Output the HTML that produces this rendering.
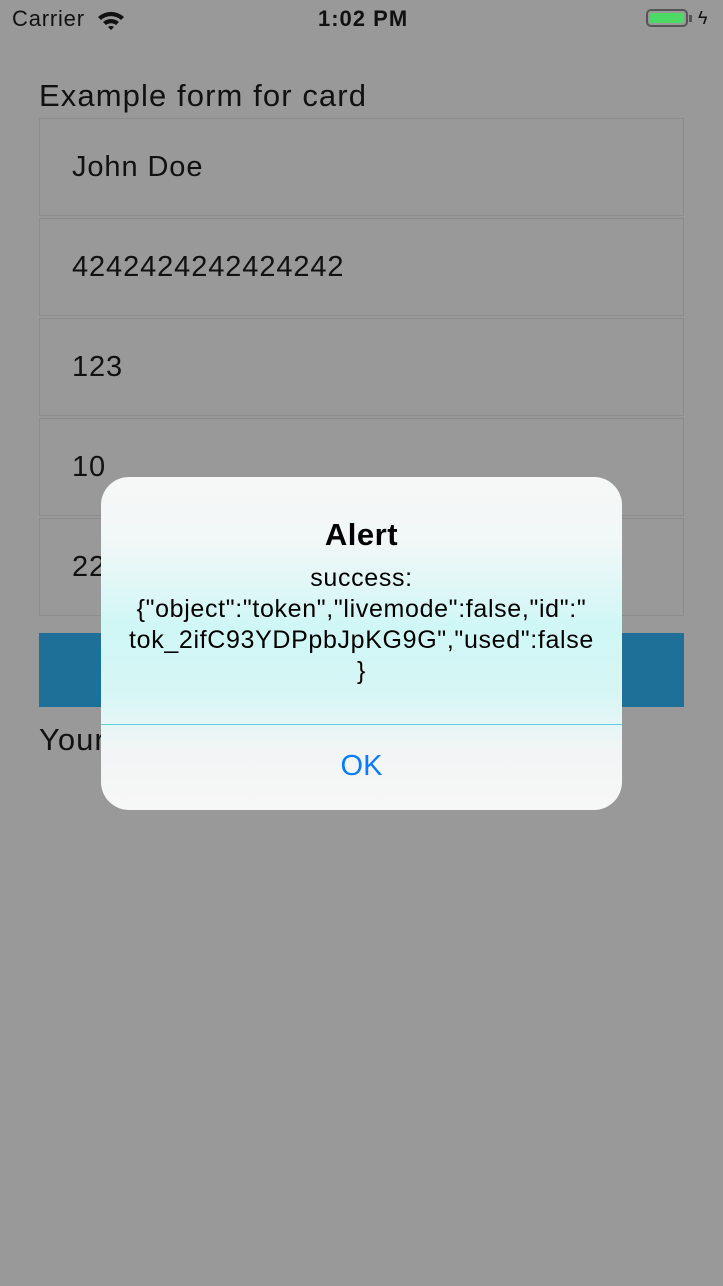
<!DOCTYPE html>
<html><head><meta charset="utf-8"><style>
body{margin:0;width:723px;height:1286px;background:#999999;font-family:"Liberation Sans",sans-serif;position:relative;overflow:hidden;color:#000}
.abs{position:absolute}
.inp{position:absolute;left:39px;width:643px;height:96px;border:1px solid #8c8c8c;background:#999;box-sizing:content-box}
.inp span{position:absolute;left:32px;top:32px;font-size:29px;color:#111;letter-spacing:0.9px}
</style></head><body>
<div class="abs" style="left:12px;top:6px;font-size:22px;color:#111;letter-spacing:0.8px">Carrier</div>
<svg class="abs" style="left:96px;top:9px" width="30" height="22" viewBox="0 0 30 22"><path d="M2 8 A19 19 0 0 1 28 8 L25 11 A15 15 0 0 0 5 11Z M7 13 A12 12 0 0 1 23 13 L20 16 A8 8 0 0 0 10 16Z M12 18 A5 5 0 0 1 18 18 L15 21Z" fill="#111"/></svg>
<div class="abs" style="left:318px;top:6px;font-size:22px;font-weight:bold;color:#111;letter-spacing:1px">1:02 PM</div>
<div class="abs" style="left:646px;top:9px;width:42px;height:18px;border:2px solid #555;border-radius:5px;box-sizing:border-box;padding:2px"><div style="width:100%;height:100%;background:#4cd964;border-radius:2px"></div></div>
<div class="abs" style="left:689px;top:15px;width:3px;height:7px;background:#555"></div>
<div class="abs" style="left:698px;top:8px;font-size:18px;color:#111">ϟ</div>
<div class="abs" style="left:39px;top:78px;font-size:31px;color:#111;letter-spacing:1.1px">Example form for card</div>
<div class="inp" style="top:118px"><span>John Doe</span></div>
<div class="inp" style="top:218px"><span>4242424242424242</span></div>
<div class="inp" style="top:318px"><span>123</span></div>
<div class="inp" style="top:418px"><span>10</span></div>
<div class="inp" style="top:518px"><span>22</span></div>
<div class="abs" style="left:39px;top:722px;font-size:31px;color:#111;letter-spacing:1px">Your</div>
<div class="abs" style="left:600px;top:722px;font-size:31px;color:#111">G</div>
<div class="abs" style="left:39px;top:633px;width:645px;height:74px;background:#1f7099"></div>
<div class="abs" style="left:101px;top:477px;width:521px;height:333px;border-radius:28px;overflow:hidden;background:linear-gradient(#f7f7f7 0%,#f1f7f7 20%,#cff7f6 45%,#d6f6f5 65%,#f2f5f5 82%,#f7f7f7 100%)">
<div class="abs" style="left:0;width:521px;top:40px;text-align:center;font-size:31px;font-weight:bold;letter-spacing:0.5px">Alert</div>
<div class="abs" style="left:0;width:521px;top:86px;text-align:center;font-size:25px;line-height:31px;white-space:nowrap;letter-spacing:0.65px">success:<br>{"object":"token","livemode":false,"id":"<br>tok_2ifC93YDPpbJpKG9G","used":false<br>}</div>
<div class="abs" style="left:0;top:247px;width:521px;height:1px;background:#5fd0e0"></div>
<div class="abs" style="left:0;width:521px;top:273px;text-align:center;font-size:29px;color:#0a7aff">OK</div>
</div>
</body></html>
